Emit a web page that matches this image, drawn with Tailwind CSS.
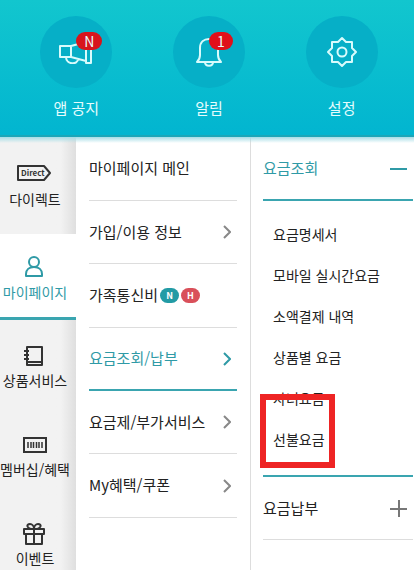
<!DOCTYPE html>
<html lang="ko">
<head>
    <meta charset="UTF-8">
    <meta name="viewport" content="width=device-width, initial-scale=1.0">
    <title>마이페이지 - 전체메뉴</title>
    <script src="https://cdn.jsdelivr.net/npm/@tailwindcss/browser@4"></script>
</head>
<body class="h-screen flex flex-col overflow-hidden bg-white text-[#222] font-['Noto_Sans_CJK_KR',sans-serif]">
    <!-- Header -->
    <header class="shrink-0 bg-linear-to-b from-[#12c6ce] to-[#02b5d0] border-b-2 border-[#1ba6b8] pt-4 pb-[15px] pl-2.5 pr-1.5">
        <nav class="grid grid-cols-3 text-[#e6fcfd] text-[15px]">
            <a href="#notice" class="flex flex-col items-center gap-2">
                <span class="relative flex size-18 items-center justify-center rounded-full bg-[#06afc7]">
                    <svg class="w-9 h-6" viewBox="0 0 36 24" fill="none" stroke="#d8fbfc" stroke-width="2" stroke-linejoin="round">
                        <path d="M2 6h11v11H2zM13 6l15-4M13 17l15 4M28 1h5v22h-5zM8 17c0 8 12 8 12 2"/>
                    </svg>
                    <span class="absolute left-9 top-4 flex h-[18px] w-[26px] items-center justify-center rounded-full bg-[#d8141c] text-sm">N</span>
                </span>
                <span class="leading-6">앱 공지</span>
            </a>
            <a href="#alarm" class="flex flex-col items-center gap-2">
                <span class="relative flex size-18 items-center justify-center rounded-full bg-[#06afc7]">
                    <svg class="size-8" viewBox="0 0 32 32" fill="none" stroke="#d8fbfc" stroke-width="2" stroke-linejoin="round">
                        <path d="M4 26c2-2 3-4 3-7v-7c0-6 4-9 9-9s9 3 9 9v7c0 3 1 5 3 7zM12 26c0 5 8 5 8 0"/>
                    </svg>
                    <span class="absolute left-9 top-4 flex h-[18px] w-6 items-center justify-center rounded-full bg-[#e0101a] text-sm">1</span>
                </span>
                <span class="leading-6">알림</span>
            </a>
            <a href="#settings" class="flex flex-col items-center gap-2">
                <span class="flex size-18 items-center justify-center rounded-full bg-[#06afc7]">
                    <svg class="size-8" viewBox="0 0 32 32" fill="none" stroke="#d8fbfc" stroke-width="2" stroke-linejoin="round">
                        <path d="M16 2l4 4h6v6l4 4-4 4v6h-6l-4 4-4-4H6v-6l-4-4 4-4V6h6z"/>
                        <circle cx="16" cy="16" r="4.500"/>
                    </svg>
                </span>
                <span class="leading-6">설정</span>
            </a>
        </nav>
    </header>

    <main class="relative flex flex-1 min-h-0">
        <div class="absolute inset-x-0 top-0 h-1.5 bg-linear-to-b from-[#a5dde6] to-transparent"></div>

        <!-- Category tabs -->
        <nav class="w-[76px] shrink-0 bg-linear-to-r from-[#f2f2f2] from-80% to-[#dfdfdf] text-sm leading-5 whitespace-nowrap">
            <a href="#direct" class="flex h-[97px] flex-col items-center gap-1 pt-6 pr-1.5">
                <svg class="w-9 h-6" viewBox="0 0 36 24" fill="none" stroke="#333" stroke-width="2" stroke-linejoin="round">
                    <path d="M1 5h26l6 7-6 7H1z"/>
                    <text x="4" y="15" font-size="8" font-weight="700" fill="#333" stroke="none">Direct</text>
                </svg>
                다이렉트
            </a>
            <a href="#mypage" class="flex h-[86px] flex-col items-center gap-1 border-b-3 border-[#3aa5b0] bg-white pt-5 pr-1.5 text-[#2f9aa6]">
                <svg class="size-6" viewBox="0 0 24 24" fill="none" stroke="currentColor" stroke-width="2" stroke-linejoin="round">
                    <circle cx="11" cy="8" r="5"/>
                    <path d="M3 22v-2c0-4 3-7 8-7s8 3 8 7v2z"/>
                </svg>
                마이페이지
            </a>
            <a href="#service" class="flex h-[89px] flex-col items-center gap-0.5 pt-6 pr-1.5">
                <svg class="size-6" viewBox="0 0 24 24" fill="none" stroke="#333" stroke-width="2" stroke-linejoin="round">
                    <path d="M4 3h15v18H4zM4 18h15M1 7h5M1 11h5M1 15h5"/>
                </svg>
                상품서비스
            </a>
            <a href="#membership" class="flex h-[89px] flex-col items-center gap-0.5 pt-6 pr-1.5">
                <svg class="size-6" viewBox="0 0 24 24" fill="none" stroke="#333" stroke-width="2">
                    <path d="M1 5h22v14H1z"/>
                    <path stroke-width="1.500" d="M5 9v6M8 9v6M10.500 9v6M13.500 9v6M16 9v6M19 9v6"/>
                </svg>
                멤버십/혜택
            </a>
            <a href="#event" class="flex h-[89px] flex-col items-center gap-0.5 pt-6 pr-1.5">
                <svg class="size-6" viewBox="0 0 24 24" fill="none" stroke="#333" stroke-width="2" stroke-linejoin="round">
                    <path d="M1 7h20v5H1zM3 12h16v10H3zM11 7v15M11 7C3 7 3 2 7 2c2 0 4 2 4 5zM11 7c8 0 8-5 4-5-2 0-4 2-4 5z"/>
                </svg>
                이벤트
            </a>
        </nav>

        <!-- Menu -->
        <nav class="w-[175px] shrink-0 border-r border-[#ddd] px-[13px] text-[15px] whitespace-nowrap">
            <a href="#main" class="flex h-16 items-center border-b border-[#ddd]">마이페이지 메인</a>
            <a href="#info" class="flex h-[63px] items-center justify-between border-b border-[#ddd] pr-1.5">
                가입/이용 정보
                <svg class="w-2 h-3.5" viewBox="0 0 8 14" fill="none" stroke="#888" stroke-width="2"><path d="M1 1l6 6-6 6"/></svg>
            </a>
            <a href="#family" class="flex h-16 items-center border-b border-[#ddd]">
                가족통신비
                <span class="ml-0.5 flex h-[15px] w-[19px] items-center justify-center rounded-full bg-[#229ba5] text-[9px] font-bold text-white">N</span>
                <span class="ml-0.5 flex h-[15px] w-[19px] items-center justify-center rounded-full bg-[#d9505a] text-[9px] font-bold text-white">H</span>
            </a>
            <a href="#bill" class="flex h-[63px] items-center justify-between border-b-2 border-[#3aa5b0] pr-1.5 text-[#2f9aa6]">
                요금조회/납부
                <svg class="w-2 h-3.5" viewBox="0 0 8 14" fill="none" stroke="currentColor" stroke-width="2"><path d="M1 1l6 6-6 6"/></svg>
            </a>
            <a href="#plan" class="flex h-[63px] items-center justify-between border-b border-[#ddd] pr-1.5">
                요금제/부가서비스
                <svg class="w-2 h-3.5" viewBox="0 0 8 14" fill="none" stroke="#888" stroke-width="2"><path d="M1 1l6 6-6 6"/></svg>
            </a>
            <a href="#coupon" class="flex h-16 items-center justify-between border-b border-[#ddd] pr-1.5">
                My혜택/쿠폰
                <svg class="w-2 h-3.5" viewBox="0 0 8 14" fill="none" stroke="#888" stroke-width="2"><path d="M1 1l6 6-6 6"/></svg>
            </a>
        </nav>

        <!-- Submenu -->
        <section class="min-w-0 flex-1 pl-3 pr-px whitespace-nowrap">
            <button type="button" aria-expanded="true" class="flex h-16 w-full items-center justify-between border-b-2 border-[#3aa5b0] pr-1.5 text-[15px] text-[#2f9aa6]">
                요금조회
                <svg class="size-[17px]" viewBox="0 0 17 17" fill="none" stroke="currentColor" stroke-width="2"><path d="M0 9h17"/></svg>
            </button>
            <ul class="border-b-2 border-[#3aa5b0] pt-[13px] pb-[15px] pl-2.5 text-sm leading-[41px]">
                <li><a href="#statement">요금명세서</a></li>
                <li><a href="#realtime">모바일 실시간요금</a></li>
                <li><a href="#micropay">소액결제 내역</a></li>
                <li><a href="#product">상품별 요금</a></li>
                <li><a href="#child">자녀요금</a></li>
                <li class="relative">
                    <a href="#prepaid">선불요금</a>
                    <span class="absolute -left-[13px] -top-[25px] h-[74px] w-[75px] border-6 border-[#ee2424]"></span>
                </li>
            </ul>
            <button type="button" aria-expanded="false" class="flex h-[63px] w-full items-center justify-between border-b border-[#ddd] pr-1.5 text-[15px]">
                요금납부
                <svg class="size-[17px]" viewBox="0 0 17 17" fill="none" stroke="#777" stroke-width="2"><path d="M0 9h17M9 0v17"/></svg>
            </button>
        </section>
    </main>
</body>
</html>
